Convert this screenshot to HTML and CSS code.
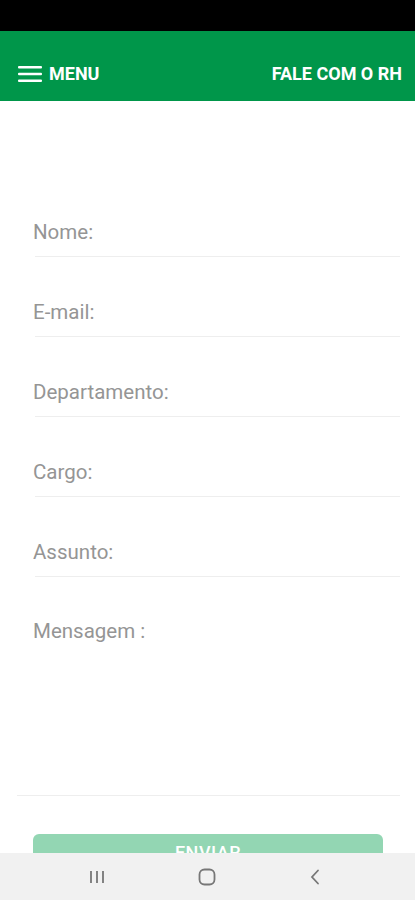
FILE: index.html
```html
<!DOCTYPE html>
<html lang="pt-BR">
<head>
  <meta charset="UTF-8">
  <meta name="viewport" content="width=device-width, initial-scale=1.0">
  <title>Fale com o RH</title>
  <link rel="stylesheet" href="styles.css">
</head>
<body>
  <div class="status-bar"></div>

  <header class="topbar">
    <a class="menu" href="#">
      <svg class="burger" width="24" height="16" viewBox="0 0 24 16">
        <rect x="0" y="0" width="24" height="2.6" rx="1"/>
        <rect x="0" y="6.7" width="24" height="2.6" rx="1"/>
        <rect x="0" y="13.4" width="24" height="2.6" rx="1"/>
      </svg>
      MENU
    </a>
    <span class="title">FALE COM O RH</span>
  </header>

  <form class="form">
    <div class="field"><input type="text" placeholder="Nome:"></div>
    <div class="field"><input type="email" placeholder="E-mail:"></div>
    <div class="field"><input type="text" placeholder="Departamento:"></div>
    <div class="field"><input type="text" placeholder="Cargo:"></div>
    <div class="field"><input type="text" placeholder="Assunto:"></div>
    <div class="field message"><textarea placeholder="Mensagem :"></textarea></div>
    <button type="button" class="send">ENVIAR</button>
  </form>

  <nav class="nav-bar">
    <svg width="16" height="14" viewBox="0 0 16 14">
      <path d="M2 1v12M8 1v12M14 1v12" stroke="#777" stroke-width="1.8" fill="none"/>
    </svg>
    <svg width="18" height="18" viewBox="0 0 18 18">
      <rect x="1.5" y="1.5" width="15" height="15" rx="5" stroke="#777" stroke-width="1.8" fill="none"/>
    </svg>
    <svg width="12" height="16" viewBox="0 0 12 16">
      <path d="M9 1.5L3 8l6 6.5" stroke="#777" stroke-width="1.8" fill="none" stroke-linecap="round"/>
    </svg>
  </nav>
</body>
</html>
```

FILE: styles.css
```css
* {
  box-sizing: border-box;
}
body {
  margin: 0;
  font-family: Roboto, "Noto Sans", sans-serif;
  background: #fff;
  height: 900px;
  overflow: hidden;
}
.status-bar {
  height: 31px;
  background: #000;
}
.topbar {
  height: 70px;
  background: #00964a;
  display: flex;
  align-items: center;
  justify-content: space-between;
  padding: 15px 13px 0 18px;
  color: #fff;
  font-weight: bold;
  font-size: 18px;
}
.menu {
  display: flex;
  align-items: center;
  gap: 7px;
  color: #fff;
  text-decoration: none;
}
.burger {
  fill: #fff;
}
.form {
  padding: 76px 15px 0 17px;
}
.field {
  height: 80px;
  margin-left: 18px;
  border-bottom: 1px solid #eeeeee;
}
.field input,
.field textarea {
  display: block;
  width: calc(100% + 2px);
  margin-left: -2px;
  border: none;
  outline: none;
  background: transparent;
  font-family: inherit;
  font-size: 20.5px;
  color: #555;
  padding: 0;
}
.field input {
  height: 80px;
  padding-top: 30px;
}
.field input::placeholder,
.field textarea::placeholder {
  color: #959595;
}
.message {
  height: 219px;
  margin-left: 0;
}
.message textarea {
  height: 200px;
  resize: none;
  line-height: 24px;
  padding-top: 42px;
  margin-left: 16px;
  width: calc(100% - 16px);
}
.send {
  display: block;
  width: 350px;
  height: 36px;
  margin: 38px 0 0 16px;
  border: none;
  border-radius: 6px;
  background: #93d6b3;
  color: #fff;
  font-family: inherit;
  font-size: 18px;
  font-weight: 500;
  letter-spacing: 0.5px;
}
.nav-bar {
  position: fixed;
  left: 0;
  right: 0;
  bottom: 0;
  height: 47px;
  background: #f1f1f1;
  display: flex;
  align-items: center;
  justify-content: space-around;
  padding: 0 48px 0 42px;
}
```
